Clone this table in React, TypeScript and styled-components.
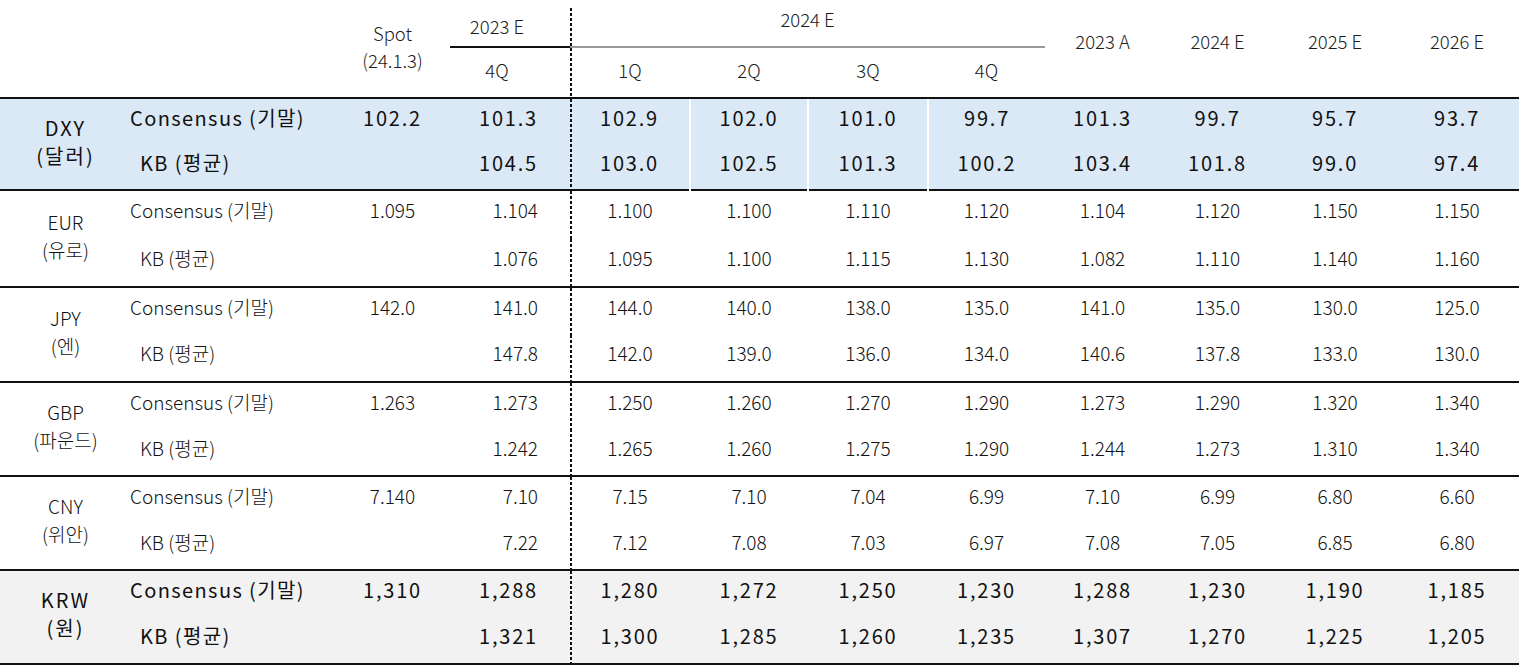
import React from 'react'
import styled, { createGlobalStyle } from 'styled-components'

type Tone = 'plain' | 'blue' | 'gray'

type Line = {
  label: string;
  spot: string;
  values: string[];
}

type Block = {
  code: string;
  name: string;
  tone: Tone;
  rowHeight: number;
  rows: Line[];
}

const blocks: Block[] = [
  {
    code: 'DXY', name: '(달러)', tone: 'blue', rowHeight: 46, rows: [
      { label: 'Consensus (기말)', spot: '102.2', values: ['101.3', '102.9', '102.0', '101.0', '99.7', '101.3', '99.7', '95.7', '93.7'] },
      { label: 'KB (평균)', spot: '', values: ['104.5', '103.0', '102.5', '101.3', '100.2', '103.4', '101.8', '99.0', '97.4'] },
    ]
  },
  {
    code: 'EUR', name: '(유로)', tone: 'plain', rowHeight: 48.5, rows: [
      { label: 'Consensus (기말)', spot: '1.095', values: ['1.104', '1.100', '1.100', '1.110', '1.120', '1.104', '1.120', '1.150', '1.150'] },
      { label: 'KB (평균)', spot: '', values: ['1.076', '1.095', '1.100', '1.115', '1.130', '1.082', '1.110', '1.140', '1.160'] },
    ]
  },
  {
    code: 'JPY', name: '(엔)', tone: 'plain', rowHeight: 47.5, rows: [
      { label: 'Consensus (기말)', spot: '142.0', values: ['141.0', '144.0', '140.0', '138.0', '135.0', '141.0', '135.0', '130.0', '125.0'] },
      { label: 'KB (평균)', spot: '', values: ['147.8', '142.0', '139.0', '136.0', '134.0', '140.6', '137.8', '133.0', '130.0'] },
    ]
  },
  {
    code: 'GBP', name: '(파운드)', tone: 'plain', rowHeight: 47, rows: [
      { label: 'Consensus (기말)', spot: '1.263', values: ['1.273', '1.250', '1.260', '1.270', '1.290', '1.273', '1.290', '1.320', '1.340'] },
      { label: 'KB (평균)', spot: '', values: ['1.242', '1.265', '1.260', '1.275', '1.290', '1.244', '1.273', '1.310', '1.340'] },
    ]
  },
  {
    code: 'CNY', name: '(위안)', tone: 'plain', rowHeight: 47, rows: [
      { label: 'Consensus (기말)', spot: '7.140', values: ['7.10', '7.15', '7.10', '7.04', '6.99', '7.10', '6.99', '6.80', '6.60'] },
      { label: 'KB (평균)', spot: '', values: ['7.22', '7.12', '7.08', '7.03', '6.97', '7.08', '7.05', '6.85', '6.80'] },
    ]
  },
  {
    code: 'KRW', name: '(원)', tone: 'gray', rowHeight: 47, rows: [
      { label: 'Consensus (기말)', spot: '1,310', values: ['1,288', '1,280', '1,272', '1,250', '1,230', '1,288', '1,230', '1,190', '1,185'] },
      { label: 'KB (평균)', spot: '', values: ['1,321', '1,300', '1,285', '1,260', '1,235', '1,307', '1,270', '1,225', '1,205'] },
    ]
  },
]

const widths = [125, 210, 115, 120, 120, 118, 120, 117, 115, 115, 120, 124]
const years = ['2023 A', '2024 E', '2025 E', '2026 E']
const quarters = ['1Q', '2Q', '3Q', '4Q']

const toneColor: Record<Tone, string> = {
  plain: '#ffffff',
  blue: '#dbe8f5',
  gray: '#f2f2f2',
}

// fine dashed rule that splits 2023 from 2024
const dashRule = `
  background-image: repeating-linear-gradient(to bottom, #111 0 3px, transparent 3px 5px);
  background-size: 2px 100%;
  background-repeat: no-repeat;
  background-position: left top;
`

const App = () => {
  return (
    <>
      <GlobalStyle />
      <Page>
        <Table>
          <colgroup>
            {widths.map((w, i) => <col key={i} style={{ width: w }} />)}
          </colgroup>
          <thead>
            <HeadRow $h={39}>
              <HeadCell colSpan={2} rowSpan={2} />
              <HeadCell rowSpan={2} $pb={12}>Spot<br />(24.1.3)</HeadCell>
              <YearCell>2023 E</YearCell>
              <GroupCell colSpan={4}>2024 E</GroupCell>
              {years.map(y => <HeadCell key={y} rowSpan={2} $pb={22}>{y}</HeadCell>)}
            </HeadRow>
            <HeadRow $h={51}>
              <QuarterCell $pr={26}>4Q</QuarterCell>
              {quarters.map((q, i) => (
                <QuarterCell key={q} $dashed={i === 0}>{q}</QuarterCell>
              ))}
            </HeadRow>
          </thead>
          <tbody>
            {blocks.map(block => block.rows.map((line, r) => {
              const strong = block.tone !== 'plain'
              const lift = block.tone === 'blue' ? 8 : 10
              return (
                <BodyRow
                  key={block.code + r}
                  $tone={block.tone}
                  $h={block.rowHeight}
                  $last={block.code === 'KRW' && r === 1}
                >
                  {r === 0 && (
                    <CodeCell rowSpan={2} $strong={strong} $lift={lift - 4}>
                      {block.code}<br />{block.name}
                    </CodeCell>
                  )}
                  <LabelCell $strong={strong} $kb={r === 1} $top={r === 0} $lift={lift}>
                    {line.label}
                  </LabelCell>
                  <NumCell $strong={strong} $top={r === 0} $lift={lift}>{line.spot}</NumCell>
                  {line.values.map((v, i) => (
                    <NumCell
                      key={i}
                      $strong={strong}
                      $top={r === 0}
                      $lift={lift}
                      $right={i === 0}
                      $dashed={i === 1}
                      $split={block.tone === 'blue' && i >= 2 && i <= 4}
                    >
                      {v}
                    </NumCell>
                  ))}
                </BodyRow>
              )
            }))}
          </tbody>
        </Table>
      </Page>
    </>
  )
}

const GlobalStyle = createGlobalStyle`
  body {
    margin: 0;
    background: #ffffff;
    font-family: "Noto Sans CJK KR", "Noto Sans", sans-serif;
    color: #1c1c1c;
  }
  th, td {
    box-sizing: border-box;
  }
`

const Page = styled.div`
  padding-top: 8px;
  width: 1519px;
`

const Table = styled.table`
  width: 1519px;
  table-layout: fixed;
  border-collapse: collapse;
`

const HeadRow = styled.tr<{ $h: number }>`
  height: ${p => p.$h}px;
`

const HeadCell = styled.th<{ $pb?: number }>`
  font-size: 18.5px;
  font-weight: 300;
  line-height: 27px;
  text-align: center;
  vertical-align: middle;
  padding: 0 0 ${p => p.$pb ?? 0}px 0;
  color: #1c1c1c;
`

const YearCell = styled.th`
  font-size: 18.5px;
  font-weight: 300;
  line-height: 24px;
  text-align: center;
  vertical-align: middle;
  padding: 0 26px 2px 0;
  border-bottom: 2px solid #111;
  color: #1c1c1c;
`

const GroupCell = styled.th`
  font-size: 18.5px;
  font-weight: 300;
  line-height: 22px;
  text-align: center;
  vertical-align: top;
  padding: 0;
  border-bottom: 2px solid #9a9a9a;
  color: #1c1c1c;
  ${dashRule}
`

const QuarterCell = styled.th<{ $dashed?: boolean; $pr?: number }>`
  font-size: 18.5px;
  font-weight: 300;
  line-height: 24px;
  text-align: center;
  vertical-align: middle;
  padding: 0 ${p => p.$pr ?? 0}px 6px 0;
  color: #1c1c1c;
  ${p => (p.$dashed ? dashRule : '')}
`

const BodyRow = styled.tr<{ $tone: Tone; $h: number; $last?: boolean }>`
  background: ${p => toneColor[p.$tone]};
  height: ${p => p.$h}px;
  border-bottom: ${p => (p.$last ? '2px solid #111' : 'none')};
`

const CodeCell = styled.td<{ $strong?: boolean; $lift: number }>`
  text-align: center;
  vertical-align: middle;
  font-size: ${p => (p.$strong ? 20 : 19)}px;
  font-weight: ${p => (p.$strong ? 400 : 300)};
  letter-spacing: ${p => (p.$strong ? 2 : 0)}px;
  line-height: 28px;
  padding: 0 0 ${p => p.$lift}px 6px;
  border-top: 2px solid #111;
  color: #111;
`

const LabelCell = styled.td<{ $strong?: boolean; $kb?: boolean; $top?: boolean; $lift: number }>`
  text-align: left;
  vertical-align: middle;
  white-space: nowrap;
  font-size: ${p => (p.$strong ? 20 : 19)}px;
  font-weight: ${p => (p.$strong ? 400 : 300)};
  letter-spacing: ${p => (p.$strong ? 1.4 : 0)}px;
  padding: 0 0 ${p => p.$lift}px ${p => (p.$kb ? 15 : 5)}px;
  border-top: ${p => (p.$top ? '2px solid #111' : 'none')};
  color: #111;
`

const NumCell = styled.td<{
  $strong?: boolean;
  $top?: boolean;
  $right?: boolean;
  $dashed?: boolean;
  $split?: boolean;
  $lift: number;
}>`
  text-align: ${p => (p.$right ? 'right' : 'center')};
  vertical-align: middle;
  white-space: nowrap;
  font-size: ${p => (p.$strong ? 20 : 19)}px;
  font-weight: ${p => (p.$strong ? 400 : 300)};
  letter-spacing: ${p => (p.$strong ? 1.8 : 0)}px;
  padding: 0 ${p => (p.$right ? 32 : 0)}px ${p => p.$lift}px 0;
  border-top: ${p => (p.$top ? '2px solid #111' : 'none')};
  border-left: ${p => (p.$split ? '2px solid #ffffff' : 'none')};
  color: #111;
  ${p => (p.$dashed ? dashRule : '')}
`

export default App
